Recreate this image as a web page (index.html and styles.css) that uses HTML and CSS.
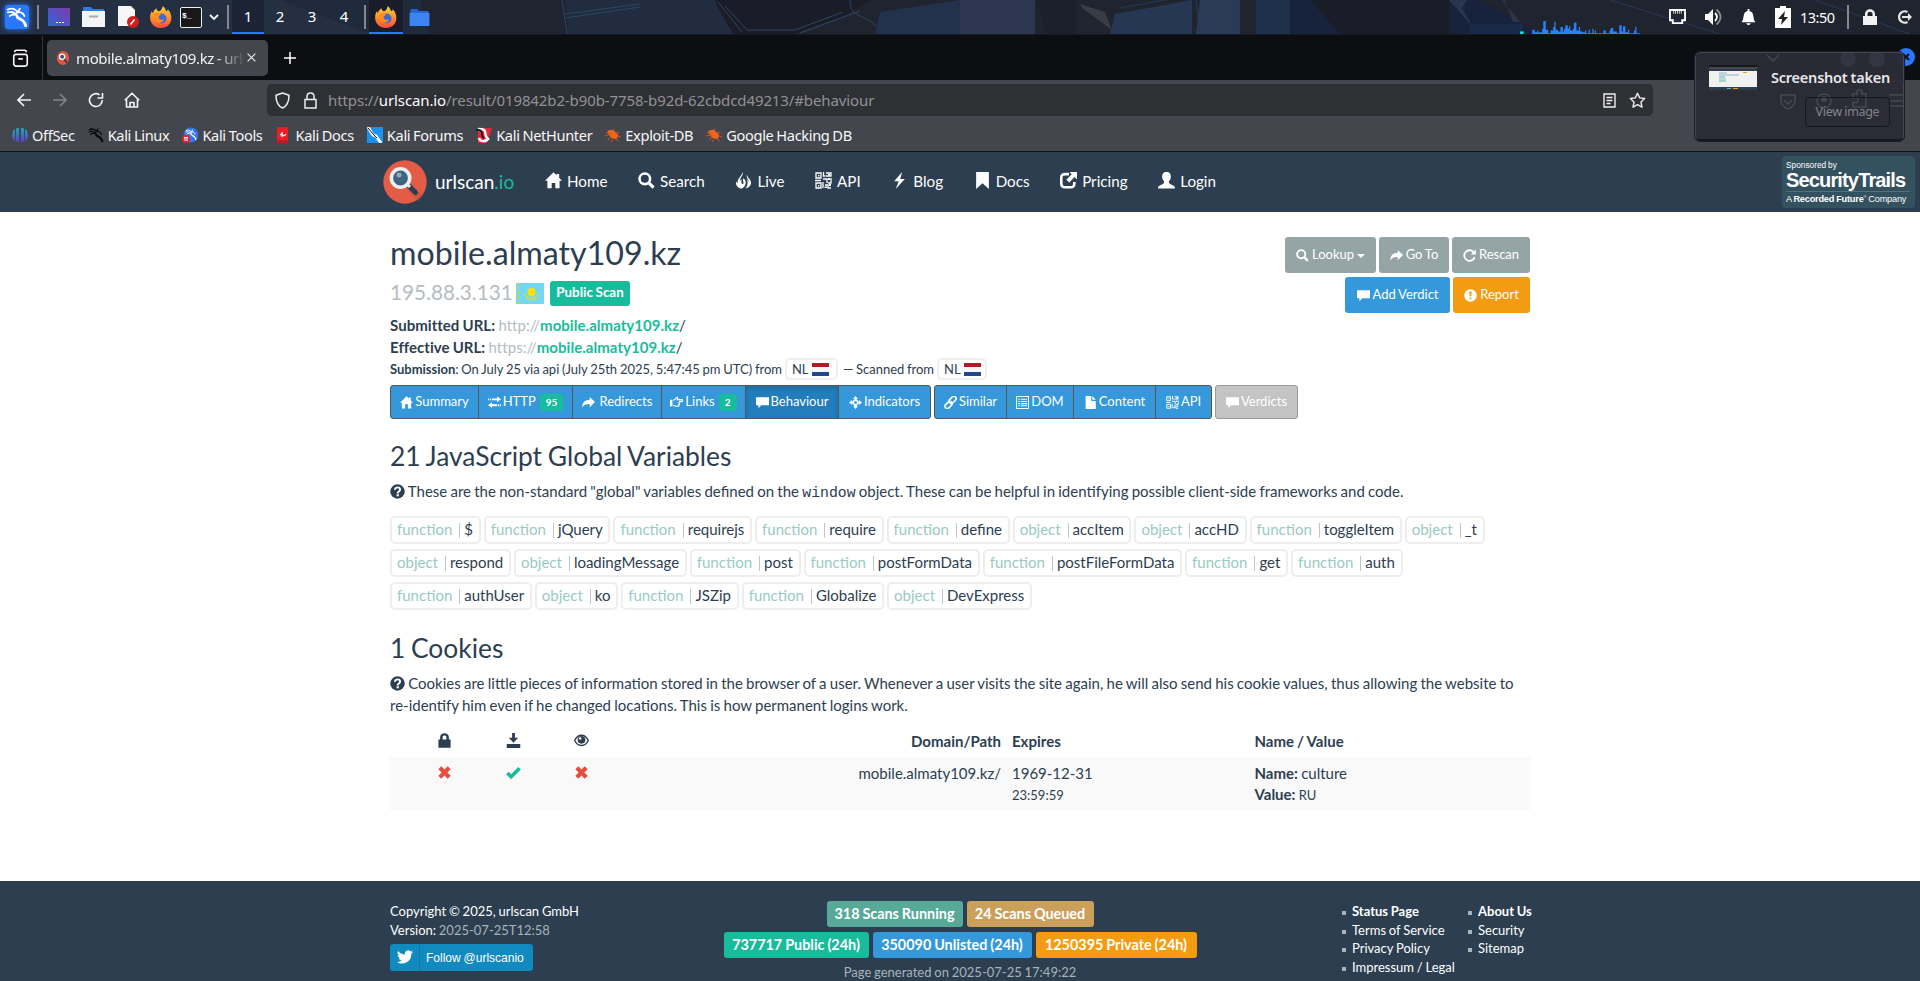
FILE: index.html
```html
<!DOCTYPE html>
<html lang="en">
<head>
<meta charset="utf-8">
<title>mobile.almaty109.kz - urlscan.io</title>
<link rel="stylesheet" href="styles.css">
</head>
<body>
<svg class="defs" width="0" height="0">
  <defs>
    <linearGradient id="fx" x1="0" y1="0" x2="0" y2="1"><stop offset="0" stop-color="#ffd43b"/><stop offset=".5" stop-color="#ff9326"/><stop offset="1" stop-color="#fb4b3e"/></linearGradient>
    <linearGradient id="pd" x1="0" y1="1" x2="1" y2="0"><stop offset="0" stop-color="#2f66d8"/><stop offset="1" stop-color="#7e3ba8"/></linearGradient>
    <linearGradient id="os" x1="0" y1="0" x2="0" y2="1"><stop offset="0" stop-color="#1fa9b8"/><stop offset="1" stop-color="#5b3fd0"/></linearGradient>
  </defs>
  <symbol id="home" viewBox="0 0 16 16"><path d="M8 .3 0 8.3h2.300V15.400h4V10.300h3.400v5.100h4V8.300H16L13.300 5.500V1.800h-2.400v1.300z"/></symbol>
  <symbol id="search" viewBox="0 0 16 16"><circle cx="6.400" cy="6.400" r="5" fill="none" stroke="currentColor" stroke-width="2.400"/><path d="m10 10 4.600 4.600" stroke="currentColor" stroke-width="3"/></symbol>
  <symbol id="fire" viewBox="0 0 16 16"><path d="M6.800 0C8.800 3.500 4 5 4.700 9c.3-1.200.7-1.900 1.300-2.500.6 2-.4 3 .3 4.300.6 1 1.700.6 1.700-.6 0-1.500-1-2.300-.2-4.400 3.400 2.200 3.200 7.700-1.800 9.900C2.300 15 .3 12.300 1 8.800c.4 1 .9 1.500 1.600 1.700C1.600 6 6.800 4.500 6.800 0zm4.500 2C11 5.200 15.600 6.500 15.100 10.700c-.4 2.600-2.400 4.400-5.300 4.800 2.400-2.600 2.700-6 1-8.800 1 .7 1.500 1.500 1.700 2.500C13.500 6.500 10 5.500 11.300 2z"/></symbol>
  <symbol id="qr" viewBox="0 0 17 17"><path fill="none" stroke="currentColor" stroke-width="1.300" d="M1 1h5v5H1zM11 1h5v3h-5M1 11h5v5H1zM8.500 0v4h2M8 7h4v4M10 13h3v3h3M16 6v5h-3M0 8.500h6M8 10v6"/><path d="M3 3h1.400v1.400H3zM3 13h1.400v1.400H3zM13 2h2v1.500h-2zM14 12h2v2h-2zM9.500 14.500H12V16H9.500zM13 6h2v2h-2z"/></symbol>
  <symbol id="flash" viewBox="0 0 16 16"><path d="M10.500 0 3 8.700h4.200L4.500 16 13 6.500H8.700z"/></symbol>
  <symbol id="bookmark" viewBox="0 0 16 16"><path d="M2 0h12v16l-6-5.500L2 16z"/></symbol>
  <symbol id="share" viewBox="0 0 16 16"><path d="M8.500 2H5Q1.200 2 1.200 5.500v5.300Q1.200 14.400 5 14.400h5q3.500 0 3.500-3.600V9.500" fill="none" stroke="currentColor" stroke-width="2.400"/><path d="M9 0h7v7l-2.300-2.200-5 5L6 7.200l5-5z"/></symbol>
  <symbol id="user" viewBox="0 0 16 16"><path d="M8 0c3 0 4.200 2 4.100 4.500C12 7 11 8 10.300 8.800c-.4 1.200.2 2 1.500 2.700C15 13 16 13.300 16 15.500H0c0-2.200 1-2.500 4.200-4 1.300-.7 1.900-1.500 1.500-2.700C5 8 4 7 3.900 4.500 3.800 2 5 0 8 0z"/></symbol>
  <symbol id="go" viewBox="0 0 16 16"><path d="M9.500 1.200v3.500C4 4.800.6 7.500.2 14 2.500 10.600 5.400 9.900 9.500 10v3.700L16 7.400z"/></symbol>
  <symbol id="refresh" viewBox="0 0 16 16"><path d="M13 3.800A6.500 6.500 0 1 0 14.300 10" fill="none" stroke="currentColor" stroke-width="2.300"/><path d="M15.800.5v6.300H9.500z"/></symbol>
  <symbol id="comment" viewBox="0 0 16 16"><path d="M0 1.500h16v10H6.500L3 15v-3.500H0z"/></symbol>
  <symbol id="excl" viewBox="0 0 16 16"><path fill-rule="evenodd" d="M8 .3a7.700 7.700 0 1 0 0 15.400A7.700 7.700 0 0 0 8 .3zM6.500 3h3L9 9H7zM6.900 10.500h2.200v2.200H6.900z"/></symbol>
  <symbol id="ques" viewBox="0 0 16 16"><circle cx="8" cy="8" r="7.700"/><path d="M5.300 6.200C5.300 2.600 10.700 2.900 10.700 6c0 2-2.500 1.900-2.500 4M7 12.100h2.500" fill="none" stroke="#fff" stroke-width="2.100"/></symbol>
  <symbol id="transfer" viewBox="0 0 16 16"><path d="M5 3h6V.5l5 3.600-5 3.500V5.200H5zM0 3h1.500v2.200H0zM2.500 3H4v2.200H2.500zM11 10.200H5V7.800L0 11.300l5 3.600v-2.400h6zM12 10.200h1.500v2.300H12zM14.500 10.200H16v2.300h-1.500z"/></symbol>
  <symbol id="hand" viewBox="0 0 16 16"><path d="M0 4.500h3v8H0z"/><path d="M4 5c2 0 2.500-1.500 4-3 1-.8 2 .2 1 2.500h6c1 0 1 2 0 2h-4c1.500 0 1.500 2 .3 2.100.8.400.7 1.800-.3 1.900.5.800 0 2-1 2C7.500 13 6 12.500 4 11.700" fill="none" stroke="currentColor" stroke-width="1.500"/></symbol>
  <symbol id="cross" viewBox="0 0 16 16"><path fill="none" stroke="currentColor" stroke-width="1.600" d="M8 3v3.500M8 9.500V13M3 8h3.500M9.500 8H13M8 4l4 4-4 4-4-4z"/><path d="m8 0 3 3.800H5zM8 16l-3-3.800h6zM0 8l3.800-3v6zM16 8l-3.800 3V5z"/></symbol>
  <symbol id="link" viewBox="0 0 16 16"><g fill="none" stroke="currentColor" stroke-width="2"><rect x="5.500" y="2" width="10" height="5.600" rx="2.800" transform="rotate(-45 10.500 4.800)"/><rect x=".6" y="8.300" width="10" height="5.600" rx="2.800" transform="rotate(-45 5.600 11.100)"/></g></symbol>
  <symbol id="list" viewBox="0 0 16 16"><path fill="none" stroke="currentColor" stroke-width="1.300" d="M.7.700h14.600v14.600H.7zM2.800 4h2M6 4h7.500M2.800 6.700h2M6 6.700h7.500M2.800 9.400h2M6 9.400h7.500M2.800 12h2M6 12h7.500"/></symbol>
  <symbol id="file" viewBox="0 0 16 16"><path d="M2 0h7v6h5.500v10H2zM10.300 0l4.200 4.500h-4.200z"/></symbol>
  <symbol id="lock" viewBox="0 0 16 16"><path fill-rule="evenodd" d="M1.500 7h1.800V4.500C3.300-1 12.700-1 12.700 4.500V7h1.800v8.800h-13zM6 7h4V4.500c0-2.500-4-2.500-4 0z"/></symbol>
  <symbol id="save" viewBox="0 0 16 16"><path d="M6.500 0h3v5H13l-5 5.500L3 5h3.500zM.8 11.800h14.400V16H.8z"/></symbol>
  <symbol id="eye" viewBox="0 0 16 16"><path d="M.8 8C4 .5 12 .5 15.200 8 12 15 4 15 .8 8z" fill="none" stroke="currentColor" stroke-width="1.500"/><circle cx="8" cy="7.300" r="4.100"/><circle cx="6.600" cy="5.800" r="1.300" fill="#fff"/></symbol>
  <symbol id="x" viewBox="0 0 16 16"><path d="m3 3 10 10M13 3 3 13" stroke="currentColor" stroke-width="4.400"/></symbol>
  <symbol id="ok" viewBox="0 0 16 16"><path d="m1.500 8.500 4 4L14.500 3.500" fill="none" stroke="currentColor" stroke-width="4"/></symbol>
  <symbol id="firefox" viewBox="0 0 22 22"><path fill="url(#fx)" d="M13 0c2 2 2.500 3.500 3 5 1.200.2 1.700-.7 1.700-1.800C24 9 22.500 21.800 11 22 0 21.500-2 11 2 5c0 1 .3 1.700 1 2.300.4-2.300 1.800-4 3.600-5 0 1.500.6 2.600 2 3C12 4.500 12 2 13 0z"/><circle cx="11.500" cy="12.500" r="5" fill="#3e68d8"/><path fill="#ff8c21" d="M4 8c3-2 5-1 7 .5-1 1.700-3 1.500-2 4 1.200 2 4 1.500 5 .5-.5 4-7 5.500-9.500 1z"/></symbol>
  <symbol id="dragon" viewBox="0 0 24 24"><path fill="none" stroke="currentColor" stroke-width="2" stroke-linecap="round" d="M2 4c4-2 8-1 11 3M2 7c4-1 7 0 9 2M4 11c3-2 6-2 8-1 0 4 9 3 10 12M12 10c-2 4 4 5 7 6M12 7c3-1 7 0 8 4M13 7l2-4M16 15c3 1 4 4 5 7"/></symbol>
  <symbol id="bug" viewBox="0 0 18 16"><path fill="#ef661b" d="m3 3 6-1 6 6-2 5-6-2-4-5z"/><path fill="none" stroke="#d2581b" d="m1 5 5 2M0 9l7-1M3 14l4-4M7 16l2-4M9 4l1-3M12 6l4-1M13 9l5 1M12 11l3 4"/></symbol>
</svg>

<header class="panel">
  <svg class="wall" viewBox="0 0 1920 34" preserveAspectRatio="none">
    <rect width="1920" height="34" fill="#20242f"/>
    <path fill="#242f42" d="M0 0h420l145 34H0z"/><path fill="#202a3d" d="M280 0h280v34H370z"/><path fill="#1f2430" d="M420 0h140l10 34H430z"/>
    <path fill="#222c40" d="M566 0h150l25 34H568z"/><path fill="#1a1c27" d="m718 8 15 26h60l50-18 28-16H715z"/>
    <path fill="none" stroke="#2a4763" d="m718 2 24 30M725 6l22 24h48l48-18M562 0l5 34M565 14l75-10M565 18l75-11M800 33l60-22M850 0c0 20 15 12 30 30"/>
    <path fill="#22314c" d="M880 12 960 0v34h-85z"/><path fill="#2d3750" d="M960 0h75v34h-75z"/><path fill="#1c202d" d="m1036 0 10 34h30V0z"/><path fill="#383c43" d="m1080 4 25 8 7 18-30-22z"/><path fill="#263753" d="M1115 14 1192 0v34h-82z"/>
    <path fill="#2b3b57" d="M1200 0h40v34h-44z"/><path fill="#1d3049" d="M1256 0h44l12 34h-56z"/><path fill="#17233a" d="M1290 0h190l60 34H1290z"/><path fill="#1a1d27" d="M1310 0h140v34h-110z"/>
    <path fill="#172b49" d="M1470 24h53v10h-53z"/><path fill="#3b4564" opacity=".5" d="m1502 0 18 22h-7L1505 0zM1449 0h18l-5 8 10 18z"/><path stroke="#26395a" fill="none" d="m1610 0 110 34M1815 0l95 34M1120 8l50-9M1196 0l4 34M1238 0v34"/>
  </svg>
  <div class="panel-left">
    <svg class="kali" viewBox="0 0 26 26"><rect x="1" y="1" width="24" height="24" rx="3" fill="#2777ff"/><use href="#dragon" x="2" y="2" width="22" height="22" color="#fff"/></svg>
    <i class="bar b1"></i>
    <svg class="p-desk" viewBox="0 0 22 18"><path fill="url(#pd)" d="M0 0h22v18H0z"/><path stroke="#fff" d="M8 14.500h2m1 0h2m1 0h2"/></svg>
    <svg class="p-files" viewBox="0 0 23 20"><path fill="#2d7be5" d="M1 0h8l2 2h11v4H1z"/><path fill="#f4f4f4" d="M0 4h23v16H0z"/><path stroke="#aaa" stroke-width="2" d="M7 9.500h9"/></svg>
    <svg class="p-doc" viewBox="0 0 21 22"><path fill="#f6f6f6" d="M0 0h13l4 4v16H0z"/><circle cx="15" cy="16" r="6" fill="#d31c1c"/><path stroke="#fff" stroke-width="1.500" d="m12.500 18.500 4-5"/></svg>
    <svg class="p-fx"><use href="#firefox"/></svg>
    <span class="term">$_</span>
    <svg class="chev" viewBox="0 0 10 6"><path d="m1 1 4 4 4-4" fill="none" stroke="#fff" stroke-width="1.800"/></svg>
    <i class="bar b2"></i>
    <span class="ws on">1</span><span class="ws">2</span><span class="ws">3</span><span class="ws">4</span>
    <i class="bar b3"></i>
    <span class="task"><svg class="p-fx2"><use href="#firefox"/></svg></span>
    <svg class="p-folder" viewBox="0 0 21 18"><path fill="#2664cf" d="M1 0h7l2 2h10v5H1z"/><path fill="#3d83f2" d="M0 4h21v14H0z"/></svg>
  </div>
  <div class="panel-right">
    <svg class="cpu" viewBox="0 0 115 16" preserveAspectRatio="none"><path fill="#00e5d0" d="M0 13h3v3H0z"/><path fill="#2a80ff" d="M10 16v-5h2v3h2v-2h1v2h3v-4h1V1h2v10h2v4h2v-3h2v-4h1V2h1v9h2v2h2v-5h2v5h1v-3h1V6h2v4h1v-3h1v5h2v-2h1V3h2v9h2v-4h1v5h2v1h2v-2h1v3h2v-4h1v4h2v-5h1v5h1v-3h1v3h6v-3h2v3h3v-3h1v-3h2v4h3v2h2V6h2v7h1V7h2v7h2v-3h1v4h4v-3h1v-4h1v7h3v1z"/></svg>
    <svg class="t1" viewBox="0 0 18 17"><path fill="none" stroke="#fff" stroke-width="2" d="M1 1h16v11h-3v3H4v-3H1z"/><path stroke="#ddd" d="M5 2v3m2-3v3m2-3v3m2-3v3m2-3v3"/></svg>
    <svg class="t2" viewBox="0 0 18 18"><path fill="#fff" d="M0 6h3l5-5v16l-5-5H0z"/><path fill="none" stroke="#fff" stroke-width="1.800" d="M10 5q4 4 0 8"/><path fill="none" stroke="#8b8d94" stroke-width="1.800" d="M11.500 1.500q8 7.500 0 15"/></svg>
    <svg class="t3" viewBox="0 0 16 18"><path fill="#fff" d="M7 0h2v2c6 1 3 9 6.500 12H.5C4 11 1 3 7 2zM5.500 15h5q-2.500 4-5 0z"/></svg>
    <svg class="t4" viewBox="0 0 16 22"><path fill="#fff" d="M5 0h6v2h5v20H0V2h5z"/><path fill="#222" d="M10 5 3 13h4l-1 6 7-8H9z"/></svg>
    <span class="clock">13:50</span>
    <i class="bar b4"></i>
    <svg class="t5" viewBox="0 0 14 16"><path fill="#f2f2f2" fill-rule="evenodd" d="M0 7h2V5C2-1.500 12-1.500 12 5v2h2v9H0zM4.500 7h5V5c0-3-5-3-5 0z"/></svg>
    <svg class="t6" viewBox="0 0 16 16"><path fill="none" stroke="#e6e6e6" stroke-width="2.200" d="M11.500 3A5.700 5.700 0 1 0 11.500 13"/><path fill="#e6e6e6" d="M6 7h6V4l4 4-4 4V9H6z"/></svg>
  </div>
</header>

<div class="tabs">
  <svg class="fv" viewBox="0 0 18 20"><g fill="none" stroke="#f4f4f4" stroke-width="1.800"><rect x="1.500" y="6" width="15" height="13" rx="2.500"/><path d="M2.500 3.600q0-2.200 2-2.200h9q2 0 2 2.200M6.500 11h5"/></g></svg>
  <i class="tabsep"></i>
  <div class="tab">
    <svg class="fav" viewBox="0 0 14 16"><ellipse cx="7" cy="8" rx="7" ry="8" fill="#df5540"/><circle cx="6" cy="6.500" r="3" fill="#2b587c" stroke="#fff" stroke-width="1.500"/><path d="m8.500 9.500 3 4" stroke="#273846" stroke-width="2"/></svg>
    <span class="tabtext">mobile.almaty109.kz - urlscan.io</span>
    <svg class="close" viewBox="0 0 9 9"><path d="m.6.600 7.800 7.800M8.400.6.600 8.400" stroke="#eee" stroke-width="1.100"/></svg>
  </div>
  <svg class="plus" viewBox="0 0 12 12"><path d="M6 0v12M0 6h12" stroke="#fff" stroke-width="1.500"/></svg>
</div>

<div class="toolbar">
  <svg class="n1" viewBox="0 0 16 16"><path d="M15 8H2m6-6L2 8l6 6" fill="none" stroke="#f5f5f5" stroke-width="1.700"/></svg>
  <svg class="n2" viewBox="0 0 16 16"><path d="M1 8h13M8 2l6 6-6 6" fill="none" stroke="#85868b" stroke-width="1.500"/></svg>
  <svg class="n3" viewBox="0 0 16 16"><path d="M14.300 8A6.400 6.400 0 1 1 11.500 2.800M14.500 1v5h-5" fill="none" stroke="#f5f5f5" stroke-width="1.600"/></svg>
  <svg class="n4" viewBox="0 0 16 16"><path d="M2.500 7.500V15h11V7.500M.8 8.200 8 1.200l7.200 7M6 15v-4.500h4V15" fill="none" stroke="#f5f5f5" stroke-width="1.600" stroke-linejoin="round"/></svg>
  <div class="url">
    <svg class="u1" viewBox="0 0 15 17"><path d="M7.500 1 14 3.200C14 10 12 14 7.500 16 3 14 1 10 1 3.200z" fill="none" stroke="#eee" stroke-width="1.500" stroke-linejoin="round"/></svg>
    <svg class="u2" viewBox="0 0 13 17"><path d="M1 7.500h11V16H1zM3 7.500V4.500q0-3.500 3.500-3.500T10 4.500v3" fill="none" stroke="#eee" stroke-width="1.500"/></svg>
    <span class="addr">https://<b>urlscan.io</b>/result/019842b2-b90b-7758-b92d-62cbdcd49213/#behaviour</span>
    <svg class="u3" viewBox="0 0 13 15"><path d="M1 1h11v13H1zM3.500 4.500h6M3.500 7.500h6M3.500 10.500h4" fill="none" stroke="#eee" stroke-width="1.400"/></svg>
    <svg class="u4" viewBox="0 0 17 17"><path d="m8.500 1.200 2.200 4.700 5 .6-3.700 3.500 1 5.200-4.500-2.500L4 15.200 5 10 1.300 6.500l5-.6z" fill="none" stroke="#eee" stroke-width="1.400" stroke-linejoin="round"/></svg>
  </div>
</div>

<div class="bookmarks">
  <span><svg viewBox="0 0 16 16"><path fill="url(#os)" d="M7 1v14h-1Q0 14 0 8t6-7zM9 1v14h1q6-1 6-7t-6-7z"/><path stroke="#44464d" d="M3.500 0v16m9-16v16"/></svg>OffSec</span>
  <span><svg color="#08090b"><use href="#dragon"/></svg>Kali Linux</span>
  <span><svg viewBox="0 0 16 16"><circle cx="9" cy="8" r="7.500" fill="#3275ee"/><use href="#dragon" x="3" y="1" width="12" height="13" color="#fff"/><circle cx="4" cy="12" r="4" fill="#df2330"/><path stroke="#fff" d="M2 10.500h4M3 10.500V14m2-3.500V14"/></svg>Kali Tools</span>
  <span><svg viewBox="0 0 16 16"><path fill="#c3181f" d="M2 0h11v16H2z"/><path fill="#e91e25" d="M2 0h11v13H2z"/><path fill="none" stroke="#fff" stroke-width="1.200" d="M5 8q2-2 3 0t3-1M7 5v5"/></svg>Kali Docs</span>
  <span><svg viewBox="0 0 16 16"><path fill="#1892f4" d="M0 0h16v16H0z"/><path stroke="#fff" stroke-width="3" d="m1 0 5 8 3 1 5 7"/><path stroke="#111" d="m1 1 6 7 3 3"/></svg>Kali Forums</span>
  <span><svg viewBox="0 0 16 16"><path fill="#e4283c" d="M2 1h14L11 16H2z"/><path fill="none" stroke="#fff" stroke-width="2.500" d="M2 2c12 0 4 5 10 10-3 3-8 3-9-1"/><path fill="none" stroke="#191919" stroke-width="1.800" d="M0 3c10-1 3 6 8 8"/></svg>Kali NetHunter</span>
  <span><svg><use href="#bug"/></svg>Exploit-DB</span>
  <span><svg><use href="#bug"/></svg>Google Hacking DB</span>
</div>

<i class="winclose"><svg viewBox="0 0 18 18"><path d="m6 6 6 6M12 6l-6 6" stroke="#111420" stroke-width="2.400"/></svg></i>
<aside class="notice">
  <svg class="ghost" viewBox="0 0 208 87"><g fill="none" stroke="#454754" stroke-width="1.500"><path d="m71 2 6 6 6-6M85 42h14v5q0 7-7 9-7-2-7-9zM88 47l4 4 4-4M157 54v-5q5 2 5-2 0-3-5-2v-4h4q-1-5 3-4 3 0 2 4h4v13zM193 42h14M193 48h14M193 53h14"/><circle cx="128" cy="48" r="7"/></g><g fill="#343541"><circle cx="152" cy="6" r="8"/><circle cx="181" cy="6" r="8"/></g><circle cx="128" cy="46" r="3" fill="#454754"/><path d="M0 28h208" stroke="#2c2e38"/></svg>
  <svg class="thumb" viewBox="0 0 48 25"><path fill="#f0f0ee" d="M0 0h48v25H0z"/><path fill="#17191e" d="M0 0h48v2H0z"/><path fill="#45484f" d="M0 2h48v2H0z"/><path fill="#2d3e50" d="M0 4h48v2H0zM0 22h48v3H0z"/><path stroke="#8eb5d4" d="M10 8h8M10 10h20M10 14h7"/><path stroke="#56bda3" d="M10 12h6M10 16h7M18 23.500h4"/><path stroke="#f39c12" d="M34 7.500h4M24 23.500h5"/></svg>
  <div class="ntext"><strong>Screenshot taken</strong><span class="view">View image</span></div>
</aside>

<nav class="site">
  <svg class="logo" viewBox="0 0 44 44"><circle cx="22" cy="22" r="21.700" fill="#e45b46"/><path fill="#c84b3a" d="m27 26 13 9-5 6-10-10z" opacity=".5"/><path stroke="#2c3e50" stroke-width="5" stroke-linecap="round" d="m26 26 6.500 6.500"/><path stroke="#e8ecef" stroke-width="3" d="m23 23 4 4"/><circle cx="17.500" cy="18" r="9.200" fill="#3d6581" stroke="#ecf0f1" stroke-width="3.600"/><circle cx="16" cy="15" r="2.500" fill="#93a9b7"/></svg>
  <span class="brand">urlscan<em>.io</em></span>
  <div class="menu">
    <a><svg><use href="#home"/></svg>Home</a><a><svg><use href="#search"/></svg>Search</a><a><svg><use href="#fire"/></svg>Live</a><a><svg><use href="#qr"/></svg>API</a><a><svg><use href="#flash"/></svg>Blog</a><a><svg><use href="#bookmark"/></svg>Docs</a><a><svg><use href="#share"/></svg>Pricing</a><a><svg><use href="#user"/></svg>Login</a>
  </div>
  <div class="sponsor"><span class="s1">Sponsored by</span><b class="s2">SecurityTrails</b><span class="s3">A <b>Recorded Future</b><sup>®</sup> Company</span></div>
</nav>

<main class="content">
  <div class="top">
    <div>
      <h1>mobile.almaty109.kz</h1>
      <div class="ip"><span>195.88.3.131</span><svg viewBox="0 0 28 21"><path fill="#73d7f8" d="M0 0h28v21H0z"/><path stroke="#c8d94f" stroke-width="2" stroke-dasharray="2 1" d="M2.500 0v21"/><circle cx="15.500" cy="9" r="4" fill="#ffe000"/><path fill="none" stroke="#e1db35" stroke-width="1.600" stroke-dasharray="2 1" d="M8 11q7 8 16 0M10 15q6 4 11 0"/></svg><b>Public Scan</b></div>
    </div>
    <div class="actions">
      <div><a class="btn g w1"><svg><use href="#search"/></svg>Lookup<i class="caret"></i></a><a class="btn g w2"><svg><use href="#go"/></svg>Go To</a><a class="btn g w3"><svg><use href="#refresh"/></svg>Rescan</a></div>
      <div><a class="btn bl w4"><svg><use href="#comment"/></svg>Add Verdict</a><a class="btn or w5"><svg><use href="#excl"/></svg>Report</a></div>
    </div>
  </div>
  <div class="line"><b>Submitted URL:</b> <i>http://</i><b class="gr">mobile.almaty109.kz</b>/</div>
  <div class="line"><b>Effective URL:</b> <i>https://</i><b class="gr">mobile.almaty109.kz</b>/</div>
  <div class="line sub"><span><b>Submission</b>: On July 25 via api (July 25th 2025, 5:47:45 pm UTC) from</span><span class="nl wide">NL<i class="flag"></i></span><span class="sf">— Scanned from</span><span class="nl">NL<i class="flag"></i></span></div>
  <div class="pills">
    <div class="grp"><a class="p1"><svg><use href="#home"/></svg>Summary</a><a class="p2"><svg><use href="#transfer"/></svg>HTTP<b>95</b></a><a class="p3"><svg><use href="#go"/></svg>&nbsp;Redirects</a><a class="p4"><svg><use href="#hand"/></svg>Links<b>2</b></a><a class="p5 act"><svg><use href="#comment"/></svg>Behaviour</a><a class="p6"><svg><use href="#cross"/></svg>Indicators</a></div>
    <div class="grp"><a class="p7"><svg><use href="#link"/></svg>Similar</a><a class="p8"><svg><use href="#list"/></svg>DOM</a><a class="p9"><svg><use href="#file"/></svg>Content</a><a class="p10"><svg><use href="#qr"/></svg>API</a></div>
    <div class="grp dis"><a class="p11"><svg><use href="#comment"/></svg>Verdicts</a></div>
  </div>
  <h2>21 JavaScript Global Variables</h2>
  <p><svg class="q"><use href="#ques"/></svg> These are the non-standard "global" variables defined on the <code>window</code> object. These can be helpful in identifying possible client-side frameworks and code.</p>
  <div class="vars">
    <div><span><i>function</i><u></u>$</span><span><i>function</i><u></u>jQuery</span><span><i>function</i><u></u>requirejs</span><span><i>function</i><u></u>require</span><span><i>function</i><u></u>define</span><span><i>object</i><u></u>accItem</span><span><i>object</i><u></u>accHD</span><span><i>function</i><u></u>toggleItem</span><span><i>object</i><u></u>_t</span></div>
    <div><span><i>object</i><u></u>respond</span><span><i>object</i><u></u>loadingMessage</span><span><i>function</i><u></u>post</span><span><i>function</i><u></u>postFormData</span><span><i>function</i><u></u>postFileFormData</span><span><i>function</i><u></u>get</span><span><i>function</i><u></u>auth</span></div>
    <div><span><i>function</i><u></u>authUser</span><span><i>object</i><u></u>ko</span><span><i>function</i><u></u>JSZip</span><span><i>function</i><u></u>Globalize</span><span><i>object</i><u></u>DevExpress</span></div>
  </div>
  <h2 class="ck">1 Cookies</h2>
  <p><svg class="q"><use href="#ques"/></svg> Cookies are little pieces of information stored in the browser of a user. Whenever a user visits the site again, he will also send his cookie values, thus allowing the website to<br>re-identify him even if he changed locations. This is how permanent logins work.</p>
  <div class="row head"><span></span><span class="ic"><svg><use href="#lock"/></svg></span><span class="ic"><svg><use href="#save"/></svg></span><span class="ic"><svg><use href="#eye"/></svg></span><b class="dom">Domain/Path</b><b>Expires</b><b>Name / Value</b></div>
  <div class="row"><span></span><span class="ic red"><svg><use href="#x"/></svg></span><span class="ic green"><svg><use href="#ok"/></svg></span><span class="ic red"><svg><use href="#x"/></svg></span><span class="dom">mobile.almaty109.kz/</span><span>1969-12-31<br><small>23:59:59</small></span><span><b>Name:</b> culture<br><b>Value:</b> <small>RU</small></span></div>
</main>

<footer>
  <div class="foot">
    <div class="fl">Copyright © 2025, urlscan GmbH<br>Version: <i>2025-07-25T12:58</i>
      <a class="tw"><span><svg viewBox="0 0 24 20"><path fill="#fff" d="M24 2.400a10 10 0 0 1-2.800.8A5 5 0 0 0 23.300.4a10 10 0 0 1-3.100 1.200 4.900 4.900 0 0 0-8.400 4.500A14 14 0 0 1 1.700.9a4.900 4.900 0 0 0 1.500 6.600A5 5 0 0 1 1 6.900c0 2.400 1.700 4.400 3.900 4.900a5 5 0 0 1-2.200.1 4.900 4.900 0 0 0 4.600 3.400A9.900 9.900 0 0 1 0 17.400 14 14 0 0 0 21.500 4.900 10 10 0 0 0 24 2.400z"/></svg></span><em>Follow @urlscanio</em></a>
    </div>
    <div class="fc">
      <div><b class="c1">318 Scans Running</b><b class="c2">24 Scans Queued</b></div>
      <div><b class="c3">737717 Public (24h)</b><b class="c4">350090 Unlisted (24h)</b><b class="c5">1250395 Private (24h)</b></div>
      <span>Page generated on 2025-07-25 17:49:22</span>
    </div>
    <ul class="l1"><li><b>Status Page</b></li><li>Terms of Service</li><li>Privacy Policy</li><li>Impressum / Legal</li></ul>
    <ul class="l2"><li><b>About Us</b></li><li>Security</li><li>Sitemap</li></ul>
  </div>
</footer>
</body>
</html>
```

FILE: styles.css
```css
*{box-sizing:border-box;word-spacing:-.04em}
body{margin:0;width:1920px;height:981px;overflow:hidden;position:relative;background:#fff;font:15px/21.4px Lato,sans-serif;color:#2c3e50}
svg{display:block;flex:none;fill:currentColor}
i,em{font-style:normal}
.defs{position:absolute}
a{white-space:nowrap}

.panel{position:relative;height:35px;border-bottom:1px solid #171920;display:flex;justify-content:space-between;overflow:hidden;font:15px "Noto Sans",sans-serif;color:#fff}
.wall{position:absolute;left:0;top:0;width:1920px;height:34px}
.panel-left,.panel-right{position:relative;display:flex;align-items:center;height:34px}
.bar{width:2px;height:24px;background:#85878d;flex:none}
.kali{width:26px;height:26px;margin-left:4px;filter:drop-shadow(0 0 3px #2777ff)}
.b1{margin-left:7px}
.p-desk{width:22px;height:18px;margin-left:9px}
.p-files{width:23px;height:20px;margin-left:12px}
.p-doc{width:21px;height:22px;margin-left:13px}
.p-fx{width:22px;height:22px;margin-left:11px}
.term{width:22px;height:21px;margin-left:8px;background:#181818;border:1px solid #eee;border-radius:2px;font:bold 8px/9px "Liberation Mono",monospace;padding:3px 0 0 1px}
.chev{width:10px;height:6px;margin-left:7px}
.b2{margin-left:8px;margin-right:3px}
.ws{width:32px;height:34px;line-height:33px;text-align:center}
.ws.on{background:#1b2334;border-bottom:2px solid #2777ff}
.b3{margin-left:4px;margin-right:3px}
.task{width:34px;height:34px;background:#1a1d29;border-bottom:2px solid #2777ff;padding:6px}
.p-fx2{width:22px;height:22px}
.p-folder{width:21px;height:17px;margin-left:6px}
.cpu{width:141px;height:14px;align-self:flex-end;margin-right:8px}
.t1{width:17px;height:16px;margin-right:19px}
.t2{width:18px;height:18px;margin-right:18px}
.t3{width:15px;height:17px;margin-right:19px}
.t4{width:16px;height:22px;margin-right:9px}
.clock{width:39px;font-size:14.500px;letter-spacing:-.5px}
.b4{margin:0 14px 0 8px}
.t5{width:14px;height:16px;margin-right:19px}
.t6{width:16px;height:16px;margin-right:8px}

.tabs{height:45px;background:#0d0e12;display:flex;align-items:center;font:15px "Noto Sans",sans-serif;color:#f2f2f2}
.fv{width:17px;height:18px;margin-left:12px}
.tabsep{width:1px;height:44px;background:#33353c;margin:0 4px 0 13px}
.tab{width:221px;height:36px;border-radius:5px;background:#44464d;display:flex;align-items:center;padding-left:9px}
.fav{width:14px;height:14px;margin-right:6px}
.tabtext{width:168px;white-space:nowrap;overflow:hidden;letter-spacing:-.38px;-webkit-mask-image:linear-gradient(90deg,#000 138px,transparent 170px);mask-image:linear-gradient(90deg,#000 138px,transparent 170px)}
.close{width:9px;height:9px;margin-left:3px}
.plus{width:12px;height:12px;margin-left:16px}

.toolbar{height:40px;background:#44464d;display:flex;align-items:center}
.n1,.n2,.n3,.n4{width:16px;height:16px}
.n1{margin-left:16px}.n2{margin-left:20px}.n3{margin-left:20px}.n4{margin-left:20px}
.url{width:1386px;height:32px;margin-left:127px;border-radius:5px;background:#2f3034;display:flex;align-items:center;font:15px "Noto Sans",sans-serif;color:#919297}
.url b{font-weight:400;color:#fbfbfe}
.u1{width:15px;height:17px;margin-left:8px}
.u2{width:13px;height:17px;margin:0 11px 0 14px}
.addr{width:1275px;letter-spacing:-.11px}
.u3{width:13px;height:15px}
.u4{width:17px;height:17px;margin-left:13px}

.bookmarks{height:32px;background:#44464d;border-bottom:1px solid #101216;display:flex;align-items:center;gap:13px;padding:0 0 2px 12px;font:14.600px "Noto Sans",sans-serif;letter-spacing:-.34px;color:#f7f7f7}
.bookmarks span{display:flex;align-items:center;gap:4px;white-space:nowrap}
.bookmarks svg{width:16px;height:16px}

.winclose{position:absolute;left:1897px;top:48px;width:18px;height:18px;border-radius:9px;background:#2777ff}
.notice{position:absolute;left:1695px;top:52px;width:209px;height:89px;background:rgba(42,43,54,.97);border:1px solid #44465a;border-bottom:2px solid #171820;border-radius:5px;display:flex;font-family:"Noto Sans",sans-serif;outline:1px solid #1b1c23}
.ghost{position:absolute;left:0;top:0;width:208px;height:87px}
.thumb{position:relative;width:48px;height:25px;margin:12px 0 0 13px}
.ntext{position:relative;width:119px;margin-left:14px;padding-top:14px;display:flex;flex-direction:column;align-items:flex-end}
.ntext strong{font-size:14.500px;line-height:20px;font-weight:600;letter-spacing:-.22px;color:#e7e7ea;white-space:nowrap}
.view{width:85px;height:30px;margin-top:10px;border:1px solid #17181f;border-radius:4px;font-size:12.500px;letter-spacing:-.3px;line-height:28px;color:#83848b;text-align:center;white-space:nowrap}

.site{height:60px;background:#2c3e50;display:flex;align-items:center;padding-left:383px;color:#fff}
.logo{width:44px;height:44px}
.brand{width:81px;margin-left:8px;font-size:19px}
.brand em{color:#18bc9c}
.menu{display:flex;gap:30.600px;margin-left:29px;font-size:15.200px}
.menu a{display:flex;align-items:center;gap:5px}
.menu svg{width:17px;height:17px;margin-top:-3px}
.sponsor{margin-left:auto;margin-right:5px;width:133px;height:52px;border-radius:4px;background:#34515f;padding:5px 0 0 4px;font-family:"Liberation Sans",sans-serif;display:flex;flex-direction:column;white-space:nowrap}
.s1{font-size:8.300px;line-height:9px}
.s2{font-size:20px;line-height:21px;letter-spacing:-.85px;width:124px;border-bottom:1px solid #58707c}
.s3{font-size:9.200px;line-height:15px;letter-spacing:-.2px}
.s3 sup{font-size:4px;line-height:0}

.content{width:1140px;margin:0 auto;height:669px}
.top{display:flex;justify-content:space-between;height:102px}
h1{margin:22px 0 0;font-weight:400;font-size:32.200px;line-height:38px}
.ip{display:flex;align-items:center;margin-top:8px;height:26px;font-size:20.700px;color:#b4bcc2}
.ip span{width:126px}
.ip svg{width:28px;height:21px}
.ip b{width:80px;height:25px;margin-left:6px;border-radius:3px;background:#18bc9c;color:#fff;font-size:13.400px;line-height:23px;text-align:center}
.actions{padding-top:25px;display:flex;flex-direction:column;gap:4px}
.actions>div{display:flex;justify-content:flex-end;gap:3px}
.btn{height:36px;border-radius:3px;color:#fff;font-size:13px;display:flex;align-items:center;justify-content:center;gap:3px}
.btn svg{width:13px;height:13px}
.g{background:#95a5a6}.bl{background:#3498db}.or{background:#f39c12}
.w1{width:91px}.w2{width:70px}.w3{width:78px}.w4{width:105px}.w5{width:77px}
.caret{border:4px solid transparent;border-top-color:#fff;border-bottom:0;margin-top:2px}
.line{height:22px;line-height:22px;white-space:nowrap;letter-spacing:.04px}
.line i{color:#b4bcc2}
.gr{color:#18bc9c}
.sub{display:flex;align-items:center;font-size:13px;letter-spacing:-.02px}
.sub .nl{margin-left:3px;width:50px;height:22px;border:2px solid #ecf0f1;border-radius:5px;display:flex;align-items:center;padding-left:5px;gap:3px}
.sub .nl.wide{width:53px;margin-right:5px}
.sub .flag{width:17px;height:13px;background:linear-gradient(#ae1c28 4px,#f6f6f6 4px,#f6f6f6 9px,#21468b 9px)}
.pills{display:flex;gap:3px;margin-top:5px}
.grp{display:flex;height:34px;border:1px solid #555;border-radius:3px;background:#3498db;overflow:hidden}
.grp a{display:flex;align-items:center;justify-content:center;gap:2px;color:#fff;font-size:13px;border-right:1px solid #555}
.grp a:last-child{border-right:0}
.grp svg{width:13px;height:13px}
.grp b{min-width:18px;height:17px;border-radius:3px;background:#18bc9c;font-size:10px;line-height:17px;padding:0 6px;margin-left:2px}
.grp .act{background:#217dbb;box-shadow:inset 0 3px 5px rgba(0,0,0,.125)}
.dis{background:#c4c4c4;border-color:#999}
.p1{width:88px}.p2{width:94px}.p3{width:89px}.p4{width:84px}.p5{width:93px}.p6{width:91px}.p7{width:72px}.p8{width:67px}.p9{width:82px}.p10{width:55px}.p11{width:81px}
h2{margin:21px 0 0;font-weight:400;font-size:26.400px;line-height:32px}
p{margin:8px 0 0;line-height:22px;white-space:nowrap}
.q{display:inline-block;width:15px;height:15px;vertical-align:-2px}
code{font:14.800px/1 "Liberation Mono",monospace}
.vars{margin-top:14px;display:flex;flex-direction:column;gap:5px}
.vars>div{display:flex;gap:3px}
.vars span{height:28px;border:2px solid #eee;border-radius:5px;padding:0 5.700px 0 5px;display:flex;align-items:center;white-space:nowrap}
.vars i{color:#98cbbf}
.vars u{width:1px;height:15px;background:#bcc6cc;margin:0 4px 0 7px}
.ck{margin-top:22px}
.row{display:grid;grid-template-columns:20px 69px 68px 68px 397px 242.500px 1fr;height:53px;background:#f9f9f9;padding-top:6px;line-height:21.400px}
.row.head{background:none;height:35px;margin-top:6px;padding-top:9px}
.dom{text-align:right;padding-right:11px}
.ic{display:flex;justify-content:center;padding-top:2px}
.ic svg{width:15px;height:15px}
.red{color:#e74c3c}.green{color:#18bc9c}
small{font-size:13px}

footer{height:100px;background:#2c3e50;color:#fff;font-size:13px;line-height:18.500px}
.foot{width:1140px;margin:0 auto;display:grid;grid-template-columns:334px 472px 272px 62px;padding-top:20px}
.fl{padding-top:1px}
.fl i,.fc>span{color:#a9b3b9}
.tw{display:flex;width:143px;height:27px;margin-top:5px;border-radius:3px;background:#118ac0;font-family:"Liberation Sans",sans-serif;font-size:12px}
.tw span{width:30px;border-right:1px solid #0e77a7;padding:6px 0 0 7px}
.tw svg{width:16px;height:14px}
.tw em{padding:5px 0 0 6px}
.fc{display:flex;flex-direction:column;align-items:center;gap:5px}
.fc div{display:flex;gap:4px}
.fc b{height:26px;border-radius:3px;font-size:14.400px;line-height:25px;text-align:center}
.c1{width:136px;background:#57a998}.c2{width:127px;background:#cb9f5c}.c3{width:145px;background:#18bc9c}.c4{width:159px;background:#3498db}.c5{width:161px;background:#f39c12}
ul{list-style:none;margin:1px 0 0;padding:0}
.l1{margin-left:146px}
li{padding-left:10px;position:relative;white-space:nowrap}
li::before{content:"";position:absolute;left:0;top:9px;width:4px;height:4px;background:#a9b3b9}
```
